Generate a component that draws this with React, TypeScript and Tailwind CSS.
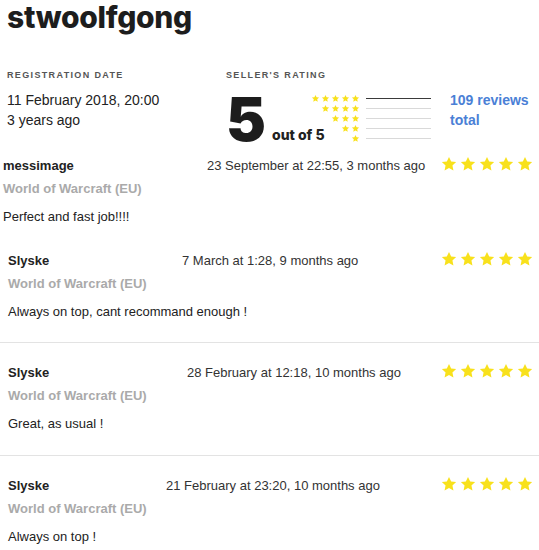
import React from "react"

const STAR = "M12 2.5l2.9 6.1 6.6.8-4.9 4.6 1.3 6.6L12 17.3 6.1 20.6l1.3-6.6L2.5 9.4l6.6-.8z"

function Star({ size }: { size: number }) {
  return (
    <svg width={size} height={size} viewBox="0 0 24 24">
      <path d={STAR} fill="#f8e11c" />
    </svg>
  )
}

const reviews = [
  {
    name: "messimage",
    date: "23 September at 22:55, 3 months ago",
    text: "Perfect and fast job!!!!",
    wrap: "pl-[3px] pb-[24px]",
    nameW: "w-[204px]",
  },
  {
    name: "Slyske",
    date: "7 March at 1:28, 9 months ago",
    text: "Always on top, cant recommand enough !",
    wrap: "pl-[8px] pb-[20px] border-b border-[#e3e3e3]",
    nameW: "w-[174px]",
  },
  {
    name: "Slyske",
    date: "28 February at 12:18, 10 months ago",
    text: "Great, as usual !",
    wrap: "pl-[8px] pt-[20px] pb-[21px] border-b border-[#e3e3e3]",
    nameW: "w-[179px]",
  },
  {
    name: "Slyske",
    date: "21 February at 23:20, 10 months ago",
    text: "Always on top !",
    wrap: "pl-[8px] pt-[20px]",
    nameW: "w-[158px]",
  },
]

export default function App() {
  return (
    <div className="w-[539px] h-[550px] overflow-hidden bg-white text-[#222] font-['Liberation_Sans',Arial,sans-serif]">
      <h1 className="px-[7px] h-[36px] leading-[34px] text-[30px] font-extrabold tracking-[-0.01em] text-[#1d1d1d] font-['Inter',sans-serif]">
        stwoolfgong
      </h1>

      <div className="flex mt-[32px] px-[7px]">
        <div className="w-[219px] shrink-0">
          <div className="text-[9px] font-bold tracking-[0.15em] text-[#555] leading-[14px]">REGISTRATION DATE</div>
          <div className="mt-[8px] text-[14px] leading-[20px]">11 February 2018, 20:00</div>
          <div className="text-[14px] leading-[20px]">3 years ago</div>
        </div>
        <div>
          <div className="text-[9px] font-bold tracking-[0.15em] text-[#555] leading-[14px]">SELLER'S RATING</div>
          <div className="flex items-start mt-[13px]">
            <div className="flex items-end w-[84px] shrink-0 whitespace-nowrap font-['Inter',sans-serif]">
              <span className="text-[60px] font-black leading-[48px] text-[#1d1d1d]">5</span>
              <span className="ml-[6px] text-[14px] font-extrabold leading-[14px] mb-[1px]">out of 5</span>
            </div>
            <div className="flex flex-col mt-[-2px]">
              {[5, 4, 3, 2, 1].map((n) => (
                <div key={n} className="flex items-center h-[10px]">
                  <div className="flex justify-end gap-[1px] w-[50px]">
                    {Array.from({ length: n }).map((_, i) => (
                      <Star key={i} size={9} />
                    ))}
                  </div>
                  <div className={n === 5 ? "ml-[6px] w-[65px] h-[1px] bg-[#3a3a3a]" : "ml-[6px] w-[65px] h-[1px] bg-[#d9d9d9]"} />
                </div>
              ))}
            </div>
            <div className="ml-[19px] mt-[-5px] text-[14px] leading-[20px] font-bold text-[#4a80d6] w-[90px]">
              109 reviews total
            </div>
          </div>
        </div>
      </div>

      <div className="mt-[13px]">
        {reviews.map((r, i) => (
          <div key={i} className={r.wrap}>
            <div className="flex items-start h-[20px] pr-[5px]">
              <span className={"shrink-0 text-[13px] font-bold leading-[20px] " + r.nameW}>{r.name}</span>
              <span className="text-[13px] leading-[20px] text-[#333] whitespace-nowrap">{r.date}</span>
              <div className="flex gap-[1px] mt-[-1px] ml-auto">
                {Array.from({ length: 5 }).map((_, j) => (
                  <Star key={j} size={18} />
                ))}
              </div>
            </div>
            <div className="mt-[3px] text-[13px] font-bold leading-[20px] text-[#aaa]">World of Warcraft (EU)</div>
            <div className="mt-[8px] text-[13px] leading-[20px]">{r.text}</div>
          </div>
        ))}
      </div>
    </div>
  )
}
